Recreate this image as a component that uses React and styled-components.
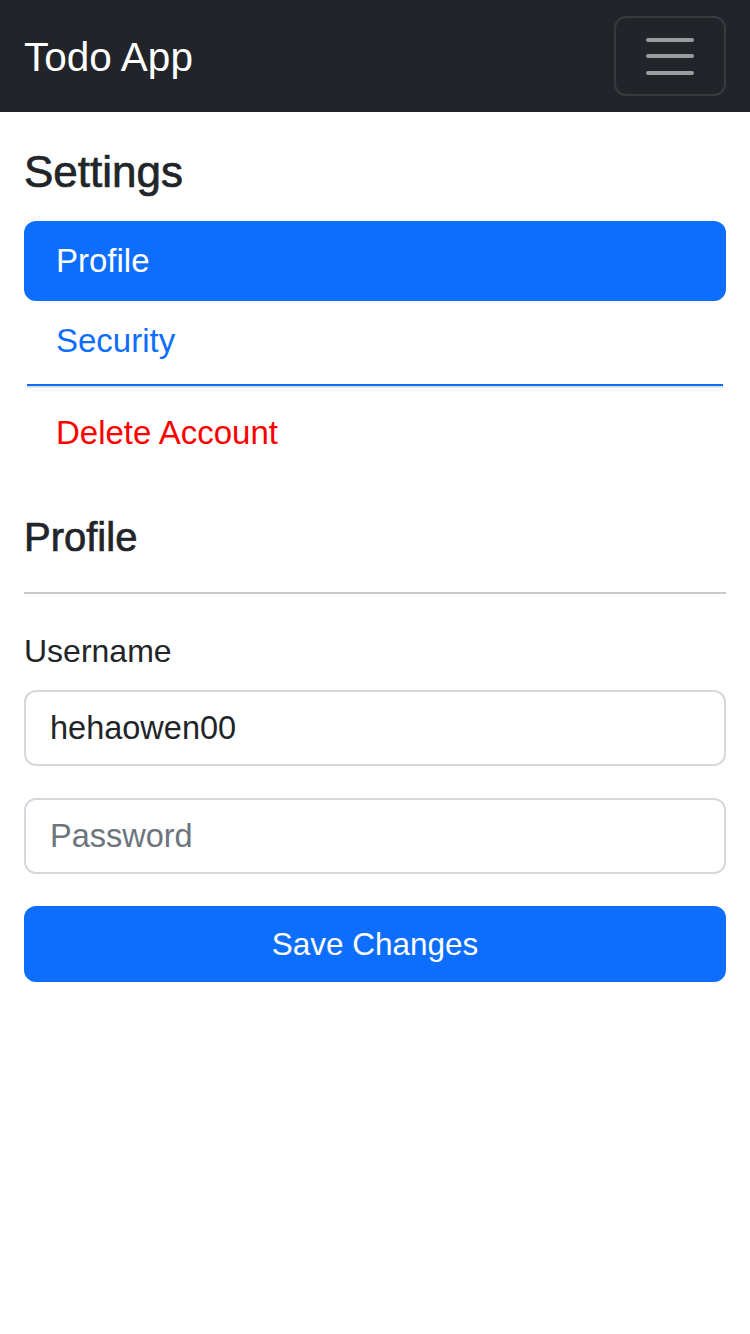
import React, { useState } from "react";
import styled, { createGlobalStyle } from "styled-components";

const GlobalStyle = createGlobalStyle`
  * {
    box-sizing: border-box;
  }
  body {
    margin: 0;
    background: #fff;
    color: #212529;
    font-family: "Liberation Sans", Arial, sans-serif;
  }
`;

const Navbar = styled.nav`
  height: 112px;
  background-color: #212529;
  display: flex;
  align-items: center;
  justify-content: space-between;
  padding: 0 24px;
`;

const Brand = styled.a`
  color: #fff;
  font-size: 40.5px;
  line-height: 1.5;
  padding-top: 3px;
  text-decoration: none;
`;

const Toggler = styled.button`
  width: 112px;
  height: 80px;
  background: transparent;
  border: 2px solid rgba(255, 255, 255, 0.1);
  border-radius: 12px;
  display: flex;
  flex-direction: column;
  align-items: center;
  justify-content: center;
  gap: 12.5px;
  padding: 0;
  cursor: pointer;
`;

const TogglerBar = styled.span`
  display: block;
  width: 48px;
  height: 4px;
  border-radius: 2px;
  background-color: #9a9da0;
`;

const Main = styled.main`
  padding: 34px 24px 0;
`;

// Liberation Sans has no medium weight, so a thin stroke stands in for it
const Title = styled.h3`
  margin: 0 0 23px;
  font-size: 44px;
  line-height: 52px;
  font-weight: 500;
  -webkit-text-stroke: 0.7px currentColor;
`;

const Pills = styled.div`
  display: flex;
  flex-direction: column;
`;

const Pill = styled.a`
  display: block;
  height: 80px;
  padding: 16px 32px;
  font-size: 33px;
  line-height: 48px;
  border-radius: 12px;
  text-decoration: none;
  cursor: pointer;
  color: ${({ $active, $danger }) =>
    $active ? "#fff" : $danger ? "#ff0000" : "#0d6efd"};
  background-color: ${({ $active }) => ($active ? "#0d6efd" : "transparent")};
`;

const PillDivider = styled.div`
  margin: 3px 3px 5px;
  height: 4px;
  border-top: 2px solid #0d6efd;
  border-bottom: 2px solid #dee2e6;
`;

const SectionTitle = styled.h4`
  margin: 40px 0 31px;
  font-size: 40px;
  line-height: 48px;
  font-weight: 500;
  -webkit-text-stroke: 0.7px currentColor;
`;

const Rule = styled.hr`
  margin: 0 0 33px;
  border: 0;
  border-top: 2px solid #c8c9ca;
`;

const Form = styled.form`
  display: flex;
  flex-direction: column;
`;

const Label = styled.label`
  font-size: 32px;
  line-height: 48px;
  margin-bottom: 15px;
`;

const Input = styled.input`
  width: 100%;
  height: 76px;
  padding: 12px 24px;
  margin-bottom: 32px;
  font-family: inherit;
  font-size: 32.5px;
  color: #212529;
  background: #fff;
  border: 2px solid #d5d8dc;
  border-radius: 12px;
  outline: none;
  &::placeholder {
    color: #6c757d;
  }
`;

const Button = styled.button`
  width: 100%;
  height: 76px;
  font-family: inherit;
  font-size: 31.5px;
  color: #fff;
  background-color: #0d6efd;
  border: none;
  border-radius: 12px;
  cursor: pointer;
`;

const App = () => {
  const [username, setUsername] = useState("hehaowen00");
  const [password, setPassword] = useState("");

  return (
    <>
      <GlobalStyle />
      <Navbar>
        <Brand href="#">Todo App</Brand>
        <Toggler type="button" aria-label="Toggle navigation">
          <TogglerBar />
          <TogglerBar />
          <TogglerBar />
        </Toggler>
      </Navbar>
      <Main>
        <Title>Settings</Title>
        <Pills>
          <Pill $active>Profile</Pill>
          <Pill>Security</Pill>
          <PillDivider />
          <Pill $danger>Delete Account</Pill>
        </Pills>
        <SectionTitle>Profile</SectionTitle>
        <Rule />
        <Form onSubmit={(e) => e.preventDefault()}>
          <Label htmlFor="username">Username</Label>
          <Input
            id="username"
            type="text"
            value={username}
            onChange={(e) => setUsername(e.target.value)}
          />
          <Input
            type="password"
            placeholder="Password"
            value={password}
            onChange={(e) => setPassword(e.target.value)}
          />
          <Button type="submit">Save Changes</Button>
        </Form>
      </Main>
    </>
  );
};

export default App;
